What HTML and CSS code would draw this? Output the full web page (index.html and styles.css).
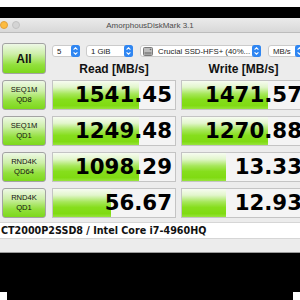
FILE: index.html
```html
<!DOCTYPE html>
<html lang="en">
<head>
    <meta charset="UTF-8">
    <title>AmorphousDiskMark 3.1</title>
    <link rel="stylesheet" href="styles.css">
</head>
<body>
    <div class="screen">
        <div class="desk-top"></div>

        <div class="window">
            <div class="titlebar">
                <div class="lights">
                    <span class="light red"></span>
                    <span class="light yellow"></span>
                    <span class="light idle"></span>
                </div>
                <div class="title">AmorphousDiskMark 3.1</div>
                <div></div>
            </div>

            <div class="content">
                <div class="board">
                    <button class="btn-all">All</button>

                    <div class="controls">
                        <div class="selects">
                            <div class="select sel-count">
                                <span class="sel-text">5</span>
                                <svg class="stepper" width="9" height="12" viewBox="0 0 9 12"><rect width="9" height="12" rx="2.5" fill="#2f86f2"/><path d="M2.6 4.6 L4.5 2.8 L6.4 4.6 M2.6 7.4 L4.5 9.2 L6.4 7.4" stroke="#fff" stroke-width="1.1" fill="none"/></svg>
                            </div>
                            <div class="select sel-size">
                                <span class="sel-text">1 GiB</span>
                                <svg class="stepper" width="9" height="12" viewBox="0 0 9 12"><rect width="9" height="12" rx="2.5" fill="#2f86f2"/><path d="M2.6 4.6 L4.5 2.8 L6.4 4.6 M2.6 7.4 L4.5 9.2 L6.4 7.4" stroke="#fff" stroke-width="1.1" fill="none"/></svg>
                            </div>
                            <div class="select sel-drive">
                                <svg class="drive" width="10" height="9" viewBox="0 0 10 9"><rect x="0.5" y="0.5" width="9" height="8" rx="1" fill="#bdbdbd" stroke="#7a7a7a"/><rect x="1.5" y="5" width="7" height="2.5" fill="#8d8d8d"/><circle cx="7.5" cy="2.5" r="0.8" fill="#666"/></svg>
                                <span class="sel-text">Crucial SSD-HFS+ (40%...</span>
                                <svg class="stepper" width="9" height="12" viewBox="0 0 9 12"><rect width="9" height="12" rx="2.5" fill="#2f86f2"/><path d="M2.6 4.6 L4.5 2.8 L6.4 4.6 M2.6 7.4 L4.5 9.2 L6.4 7.4" stroke="#fff" stroke-width="1.1" fill="none"/></svg>
                            </div>
                            <div class="select sel-unit">
                                <span class="sel-text">MB/s</span>
                                <svg class="stepper" width="9" height="12" viewBox="0 0 9 12"><rect width="9" height="12" rx="2.5" fill="#2f86f2"/><path d="M2.6 4.6 L4.5 2.8 L6.4 4.6 M2.6 7.4 L4.5 9.2 L6.4 7.4" stroke="#fff" stroke-width="1.1" fill="none"/></svg>
                            </div>
                        </div>
                        <div class="heads">
                            <div>Read [MB/s]</div>
                            <div>Write [MB/s]</div>
                        </div>
                    </div>

                    <button class="btn-test">SEQ1M<br>QD8</button>
                    <div class="cell"><div class="bar" style="width:86px"></div><span class="val">1541.45</span></div>
                    <div class="cell"><div class="bar" style="width:86px"></div><span class="val">1471.57</span></div>

                    <button class="btn-test">SEQ1M<br>QD1</button>
                    <div class="cell"><div class="bar" style="width:86px"></div><span class="val">1249.48</span></div>
                    <div class="cell"><div class="bar" style="width:86px"></div><span class="val">1270.88</span></div>

                    <button class="btn-test">RND4K<br>QD64</button>
                    <div class="cell"><div class="bar" style="width:86px"></div><span class="val">1098.29</span></div>
                    <div class="cell"><div class="bar" style="width:44px"></div><span class="val">13.33</span></div>

                    <button class="btn-test">RND4K<br>QD1</button>
                    <div class="cell"><div class="bar" style="width:58px"></div><span class="val">56.67</span></div>
                    <div class="cell"><div class="bar" style="width:44px"></div><span class="val">12.93</span></div>
                </div>

                <div class="info">CT2000P2SSD8 / Intel Core i7-4960HQ</div>
            </div>
        </div>

        <div class="desk-bottom">
            <span class="corner"></span>
            <span class="corner"></span>
        </div>
    </div>
</body>
</html>
```

FILE: styles.css
```css
html, body {
    margin: 0;
    padding: 0;
    background: #000;
}
.screen {
    width: 300px;
    height: 300px;
    overflow: hidden;
    display: flex;
    flex-direction: column;
    font-family: "Liberation Sans", Arial, sans-serif;
    color: #111;
}
.desk-top {
    height: 7px;
    background: #fff;
    border-bottom: 11px solid #000;
    flex: none;
}
.window {
    flex: none;
    background: #ececec;
    border-bottom: 1px solid #9c9c9c;
}
.titlebar {
    height: 14px;
    display: grid;
    grid-template-columns: 1fr auto 1fr;
    align-items: center;
    background: linear-gradient(#ebebeb, #d8d8d8);
    border-bottom: 1px solid #bcbcbc;
}
.lights {
    display: flex;
    gap: 4px;
    margin-left: -12px;
}
.light {
    width: 8px;
    height: 8px;
    border-radius: 50%;
    box-sizing: border-box;
}
.light.red { background: #fc605c; }
.light.yellow { background: #fdbc40; border: 1px solid #e0a03a; }
.light.idle { background: #d4d4d4; border: 1px solid #c2c2c2; }
.title {
    font-size: 8px;
    color: #4b4b4b;
}
.content {
    padding-top: 10px;
    height: 209px;
}
.board {
    display: grid;
    grid-template-columns: 45px 124px 125px;
    grid-template-rows: 31px repeat(4, 30px);
    column-gap: 5px;
    row-gap: 6px;
    padding-left: 2px;
}
.btn-all,
.btn-test {
    width: 44px;
    margin: 0;
    padding: 0;
    border: 1px solid #a3a3a3;
    border-radius: 3px;
    background: linear-gradient(#eef8e6, #cdefa8 35%, #92e03c 72%, #7dd81c);
    color: #111;
    font-family: inherit;
}
.btn-all {
    font-size: 12px;
    font-weight: bold;
}
.btn-test {
    font-size: 7.6px;
    line-height: 10px;
}
.controls {
    grid-column: 2 / 4;
    display: flex;
    flex-direction: column;
}
.selects {
    display: flex;
    gap: 6px;
    margin-top: 2px;
    height: 12px;
}
.select {
    display: flex;
    align-items: center;
    box-sizing: border-box;
    height: 12px;
    background: #fff;
    border: 1px solid #cbcbcb;
    border-radius: 3px;
    font-size: 7.8px;
    color: #222;
}
.sel-text {
    flex: 1;
    padding-left: 4px;
    white-space: nowrap;
}
.stepper {
    flex: none;
    margin-right: -1px;
}
.sel-count { width: 28px; }
.sel-size { width: 47px; margin-left: 0; }
.sel-drive { width: 121px; margin-left: 1px; background: #fff; }
.sel-unit { width: 36px; margin-left: 1px; }
.drive {
    margin-left: 2px;
    flex: none;
}
.sel-drive .sel-text {
    padding-left: 5px;
}
.heads {
    display: grid;
    grid-template-columns: 124px 125px;
    column-gap: 5px;
    margin-top: 6px;
    font-size: 12px;
    line-height: 12px;
    font-weight: bold;
    text-align: center;
    color: #111;
}
.cell {
    display: grid;
    box-sizing: border-box;
    border: 1px solid #c4c4c4;
    background: #f4f4f4;
}
.bar,
.val {
    grid-area: 1 / 1;
}
.bar {
    justify-self: start;
    background: linear-gradient(#f7fcf1, #e2f6cc 22%, #a6e75a 46%, #86de1c 66%, #80db12 88%, #98e43e);
}
.val {
    justify-self: end;
    align-self: center;
    padding-right: 3px;
    font-family: "DejaVu Sans", sans-serif;
    font-weight: bold;
    font-size: 21.3px;
    line-height: 22px;
    color: #000;
}
.info {
    margin-top: 4px;
    height: 17px;
    box-sizing: border-box;
    background: #fff;
    border-top: 1px solid #d6d6d6;
    border-bottom: 1px solid #d6d6d6;
    padding-left: 1px;
    font-family: "DejaVu Sans", sans-serif;
    font-weight: bold;
    font-size: 9.6px;
    line-height: 15px;
    color: #111;
    white-space: nowrap;
}
.desk-bottom {
    flex: 1;
    display: flex;
    justify-content: space-between;
    align-items: flex-end;
}
.corner {
    width: 7px;
    height: 8px;
    background: #fff;
}
```
